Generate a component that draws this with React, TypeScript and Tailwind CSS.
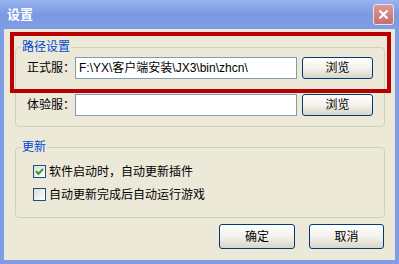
import React from 'react';

const font = { fontFamily: '"Liberation Sans", "Noto Sans CJK SC", sans-serif' };

function XpButton({ children, className }: { children: React.ReactNode; className: string }) {
    return (
        <button
            className={`flex items-center justify-center rounded-[3px] border border-[#003c74] bg-gradient-to-b from-[#ffffff] via-[#f3f2ec] to-[#d9d5c8] text-[12px] text-black ${className}`}
        >
            {children}
        </button>
    );
}

function Checkbox({ checked, label }: { checked?: boolean; label: string }) {
    return (
        <label className="flex items-center gap-[3px]">
            <span className="relative flex h-[13px] w-[13px] items-center justify-center border border-[#1c5180] bg-gradient-to-br from-[#dcdcd5] to-[#ffffff]">
                {checked && (
                    <svg width="9" height="9" viewBox="0 0 9 9">
                        <path d="M1 4.2 L3.5 6.8 L8 1.8" fill="none" stroke="#21a121" strokeWidth="2" />
                    </svg>
                )}
            </span>
            <span className="text-[12px] leading-none">{label}</span>
        </label>
    );
}

function PathRow({ label, value }: { label: string; value?: string }) {
    return (
        <div className="flex items-center">
            <span className="w-[59px] pl-[11px] text-[12px]">{label}</span>
            <div className="flex h-[22px] w-[222px] items-center border border-[#7f9db9] bg-white pl-[3px] text-[12px]">
                {value}
            </div>
            <XpButton className="ml-[5px] h-[22px] w-[71px]">浏览</XpButton>
        </div>
    );
}

export default function App() {
    return (
        <div className="relative flex h-[264px] w-[399px] flex-col bg-[#7f9de5] text-black" style={font}>
            <div className="flex h-[29px] items-center justify-between bg-gradient-to-b from-[#9ab3f0] via-[#7b99e0] to-[#7f9de4] pl-[7px] pr-[5px]">
                <span className="text-[13px] font-bold text-white">设置</span>
                <div className="flex h-[21px] w-[21px] items-center justify-center rounded-[3px] border border-[#f0e0e0] bg-gradient-to-b from-[#d99a98] to-[#c4706f]">
                    <svg width="11" height="11" viewBox="0 0 11 11">
                        <path d="M1.5 1.5 L9.5 9.5 M9.5 1.5 L1.5 9.5" stroke="#ffffff" strokeWidth="2.2" />
                    </svg>
                </div>
            </div>

            <div className="mx-[4px] mb-[4px] flex flex-1 flex-col bg-[#ece9d8] pl-[11px] pr-[10px] pt-[18px]">
                <div className="relative flex flex-col gap-[15px] rounded-[4px] border border-[#d0d0bf] pb-[10px] pt-[9px]">
                    <span className="absolute -top-[8px] left-[5px] bg-[#ece9d8] px-[1px] text-[12px] leading-[14px] text-[#0046d5]">
                        路径设置
                    </span>
                    <PathRow label="正式服：" value="F:\YX\客户端安装\JX3\bin\zhcn\" />
                    <PathRow label="体验服：" />
                </div>

                <div className="relative mt-[20px] flex flex-col gap-[10px] rounded-[4px] border border-[#d0d0bf] pb-[16px] pl-[17px] pt-[17px]">
                    <span className="absolute -top-[8px] left-[5px] bg-[#ece9d8] px-[1px] text-[12px] leading-[14px] text-[#0046d5]">
                        更新
                    </span>
                    <Checkbox checked label="软件启动时，自动更新插件" />
                    <Checkbox label="自动更新完成后自动运行游戏" />
                </div>

                <div className="mt-[6px] flex justify-end gap-[14px] pr-[1px]">
                    <XpButton className="h-[25px] w-[76px]">确定</XpButton>
                    <XpButton className="h-[25px] w-[75px]">取消</XpButton>
                </div>
            </div>

            <div className="absolute left-[10px] top-[32px] h-[61px] w-[381px] border-[4px] border-[#b80000]" />
        </div>
    );
}
